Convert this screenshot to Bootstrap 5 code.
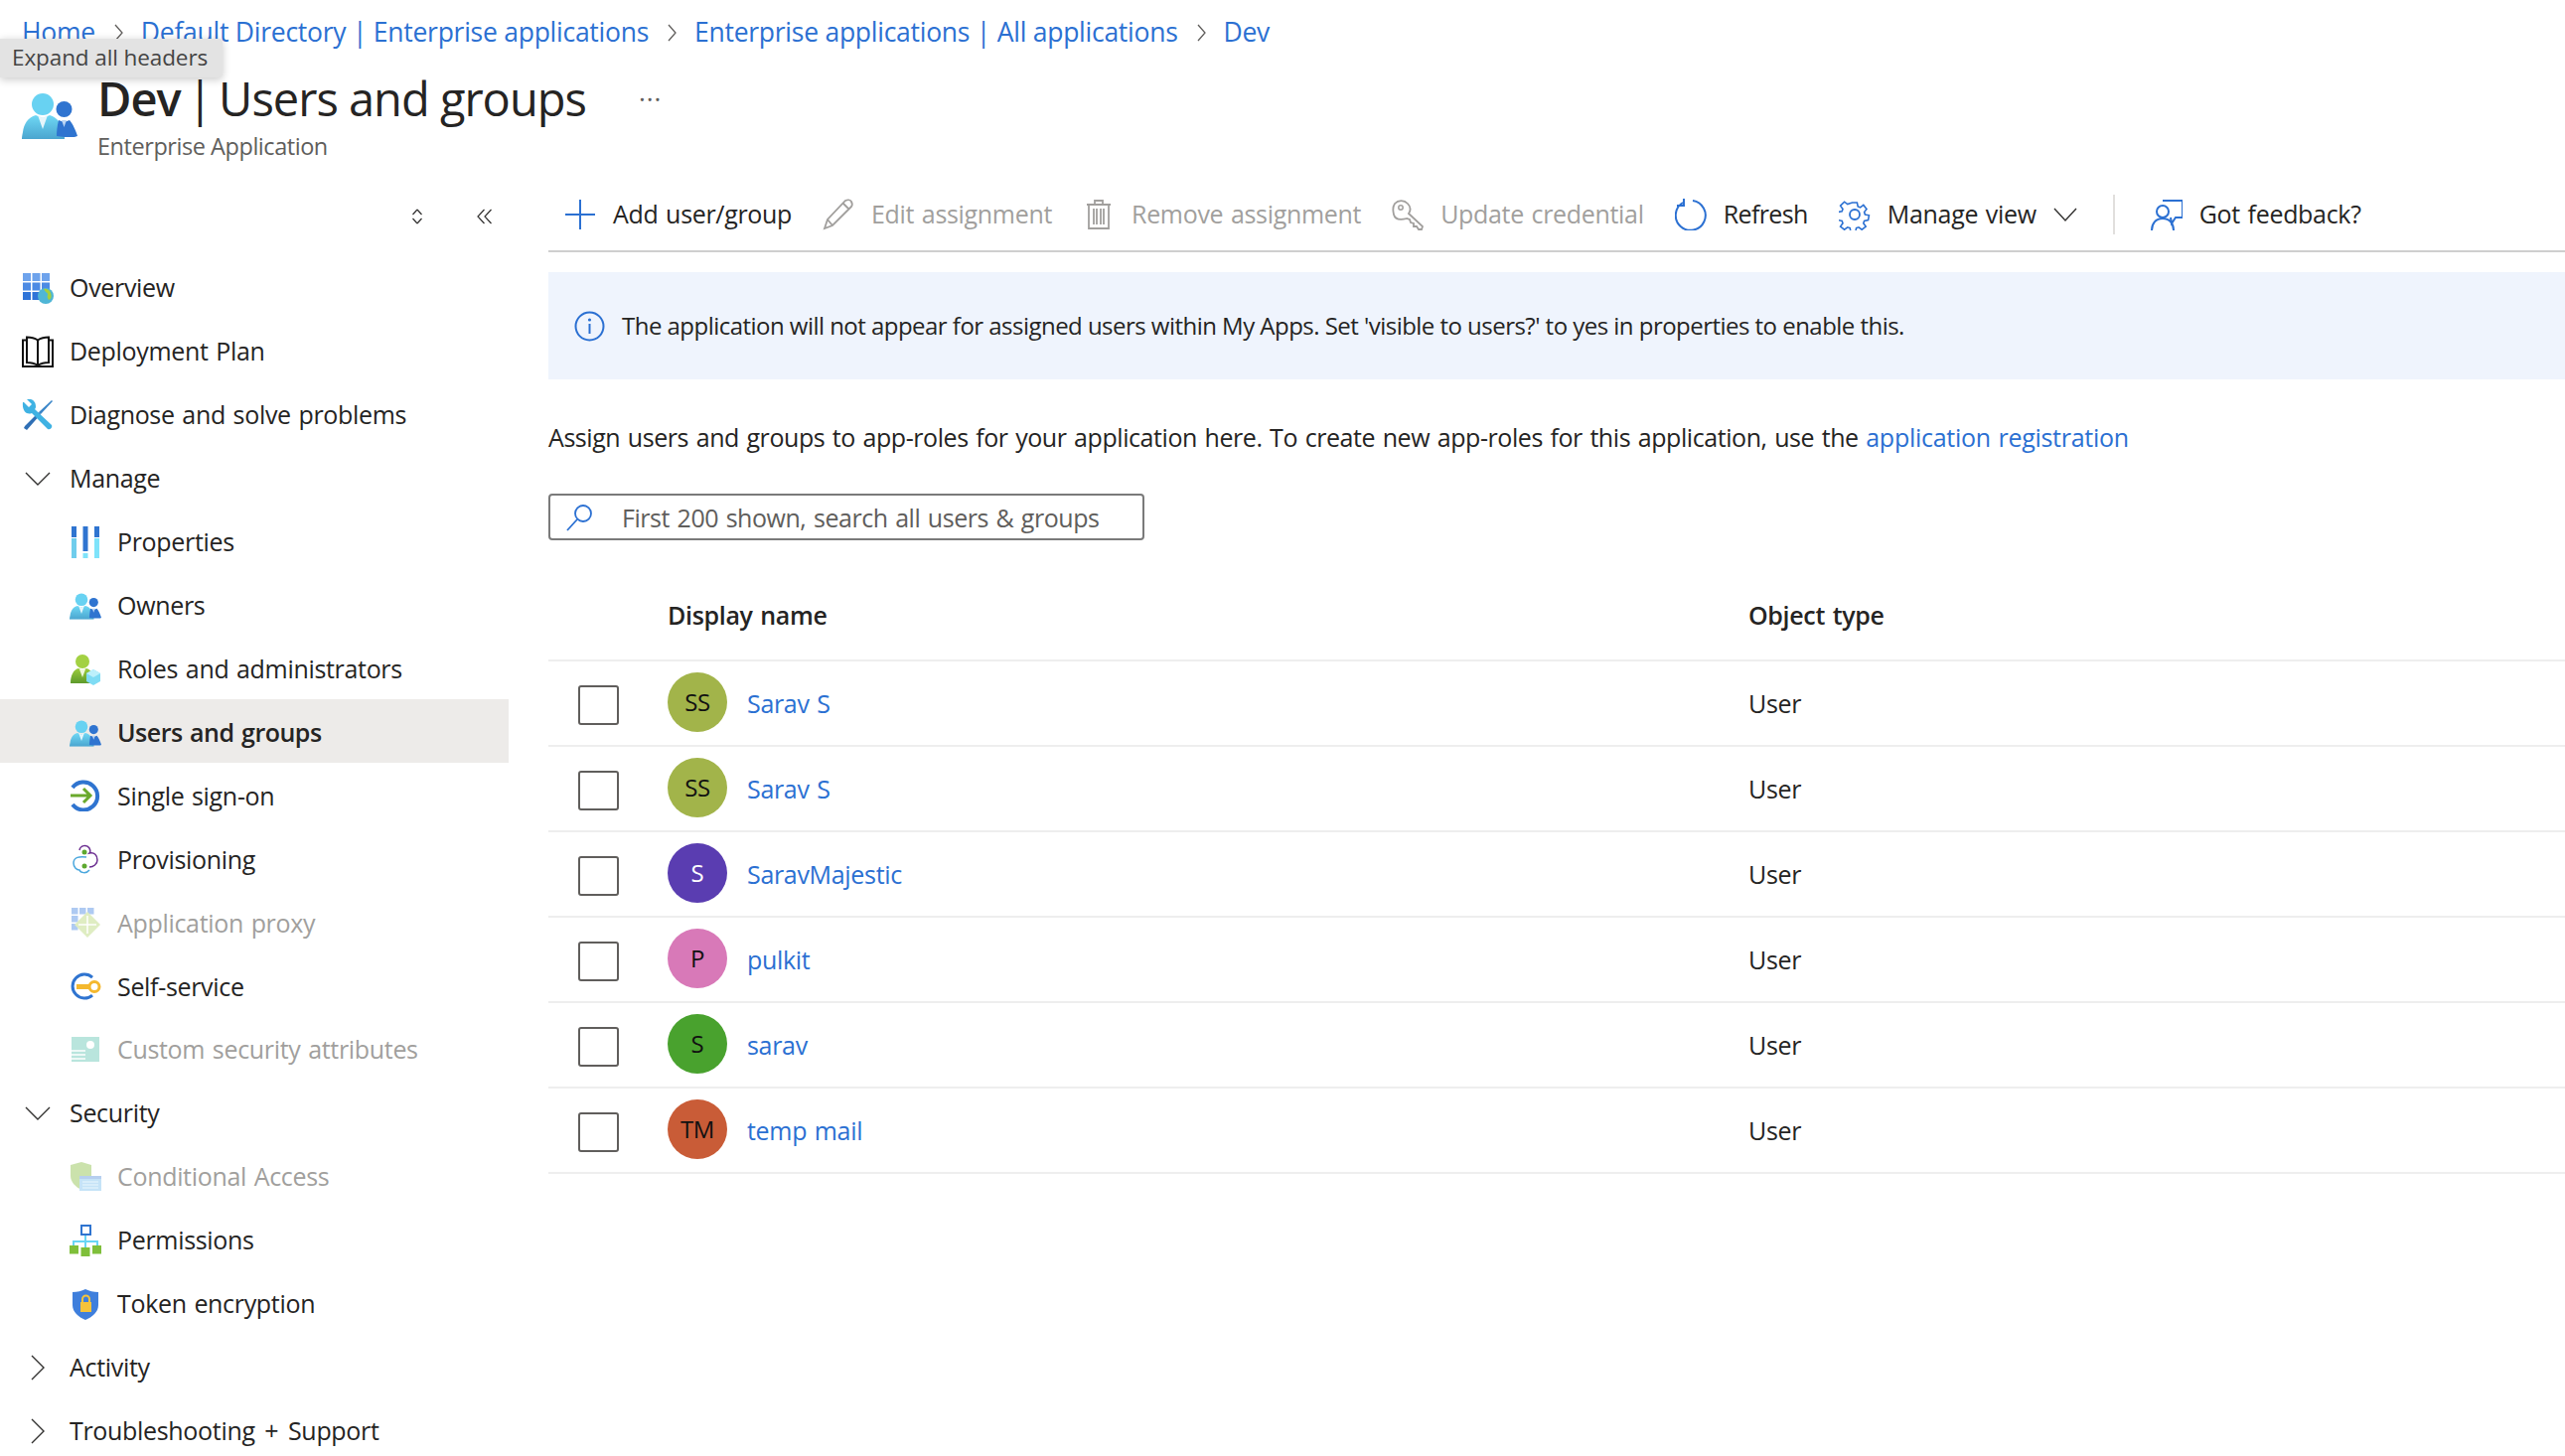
<!DOCTYPE html>
<html lang="en">
<head>
<meta charset="utf-8">
<title>Dev | Users and groups</title>
<link href="https://cdn.jsdelivr.net/npm/bootstrap@5.3.0/dist/css/bootstrap.min.css" rel="stylesheet">
<style>
html,body{height:1466px;overflow:hidden}
body{font-family:"Open Sans","Noto Sans",sans-serif;font-size:25px;letter-spacing:-.32px;word-spacing:1.5px;color:#252423;background:#fff;position:relative}
a{color:#2b70d2;text-decoration:none}
.crumbs{height:64px;padding:1px 0 0 22px;margin:0;align-items:center;--bs-breadcrumb-margin-bottom:0;flex-wrap:nowrap;font-size:26.5px;letter-spacing:-.26px;word-spacing:0}
.crumbs .breadcrumb-item{display:flex;align-items:center;padding:0}
.crumbs .breadcrumb-item::before{display:none}
.crumbs svg{margin:0 18px 0 19px;width:9px;height:18px}
.hover-tip{position:absolute;left:0;top:39px;width:224px;height:39px;background:#e3e3e3;color:#444;font-size:22.5px;letter-spacing:-.1px;word-spacing:0;padding-left:12px;line-height:38px;border-radius:0 4px 4px 0;box-shadow:0 2px 8px rgba(0,0,0,.22);white-space:nowrap;z-index:5}
.blade-head{height:116px;padding-left:22px}
.blade-ico{width:56px;height:47px;margin-top:29px;margin-right:20px}
.blade-title{font-size:47px;line-height:60px;margin:5px 0 0;font-weight:400;letter-spacing:-1px;word-spacing:0;white-space:nowrap}
.blade-title b{font-weight:600}
.blade-pipe{margin:0 -4.400px}
.blade-sub{font-size:23.5px;line-height:36px;color:#605e5c;letter-spacing:-.45px;word-spacing:0}
.blade-more{margin:20px 0 0 53px;font-size:26px;line-height:30px;color:#605e5c;letter-spacing:1px}
.side{width:512px;flex:none}
.side-top{height:78px;padding-bottom:3px;position:relative}
.side-top svg{width:20px;height:20px;margin-right:0}
.side-top .gapper{gap:48px;padding-right:14px}
.nav-row{height:63.95px;padding:0 0 0 22px;color:#252423;white-space:nowrap}
.nav-row.sub{padding-left:70px}
.nav-row .ni{width:32px;height:32px;margin-right:16px;flex:none}
.nav-row.active-row{background:#edebe9;font-weight:600;color:#252423;margin:-2px 0 2px;padding-top:4px;letter-spacing:-.5px}
.nav-row.off{color:#a19f9d}
.nav-row.off .ni{opacity:.45}
.nav-row.wide-words{word-spacing:3.500px}
.content{margin-left:40px;min-width:0}
.tools{height:74px;border-bottom:2px solid #cfcfcf;padding:0 0 1px 16px;gap:31px;white-space:nowrap}
.tool{padding:0;border:0;border-radius:0;font-size:25px;letter-spacing:-.32px;word-spacing:1.5px;color:#252423;gap:17px;--bs-btn-disabled-opacity:1;--bs-btn-disabled-color:#a19f9d;--bs-btn-disabled-border-color:transparent}
.tool.tight{letter-spacing:-.6px}
.tool svg{width:32px;height:32px;flex:none}
.tool .caret{width:24px;height:24px;margin-left:0}
.tool-sep{width:2px;height:40px;background:#e1dfdd;margin:0 5px}
.notice{height:108px;margin:20px 0 0;background:#eff4fd;padding:0 0 0 26px;gap:17px;font-size:24px;letter-spacing:-.53px;word-spacing:0}
.notice svg{width:31px;height:31px;flex:none}
.lead-in{margin:40px 0 0;line-height:36px;white-space:nowrap;letter-spacing:-.43px}
.lead-in a{letter-spacing:-.28px}
.finder{margin-top:39px;width:600px;height:47px;position:relative}
.finder svg{position:absolute;left:17px;top:10px;width:28px;height:28px}
.finder input{height:47px;border:2px solid #7a7a7a;border-radius:4px;padding:0 0 0 72px;font-size:25px;letter-spacing:-.45px;word-spacing:1.5px;box-shadow:none;background:#fff}
.finder input::placeholder{color:#605e5c;opacity:1}
.people{margin:32px 0 0;table-layout:fixed;--bs-table-bg:transparent;--bs-table-color:#252423;--bs-table-border-color:#f0f0f0}
.people th,.people td{padding:0;vertical-align:middle;border-bottom:2px solid #eeeeee;box-shadow:none}
.people thead th{height:89px;font-weight:600}
.people tbody td{height:86px;padding-top:2px}
.people tbody td a{padding-top:0}
.people .c1{width:120px}
.people .c2{width:1088px}
.tick.form-check-input{width:41px;height:40px;margin:1px 0 0 30px;border:2px solid #605e5c;border-radius:3px;display:block}
.ava{width:60px;height:60px;border-radius:50%;margin-right:20px;font-size:24px;letter-spacing:-.4px;color:#111;flex:none;margin-top:-4px}
.ava.lt{color:#fff}
</style>
</head>
<body>
<svg width="0" height="0" class="position-absolute">
<defs>
<linearGradient id="gBig" x1="0" y1="0" x2="0" y2="1"><stop offset="0" stop-color="#6fd8f5"/><stop offset="1" stop-color="#4aa5cf"/></linearGradient>
<linearGradient id="gGrn" x1="0" y1="0" x2="0" y2="1"><stop offset="0" stop-color="#9ccc3c"/><stop offset="1" stop-color="#5d9a2c"/></linearGradient>
<symbol id="i-users" viewBox="0 0 56 47">
<circle cx="21" cy="12" r="11" fill="#68d2f2"/>
<path d="M0 47c0-1 0-3 1-7 1-8 5-15 13-17l7 3 7-3c8 2 12 9 14 17 1 4 1 6 1 7z" fill="url(#gBig)"/>
<path d="M16 23l5 14 5-14-5 3z" fill="#e6f6fb"/>
<circle cx="42.500" cy="17" r="8" fill="#2f74d0"/>
<path d="M35 44c0-4 .5-10 2-16l5.500 2 5.500-2c3 3 7 12 8 16-1 .5-3 1-5 1H43z" fill="#2f74d0"/>
<path d="M40 28l2.500 7 2.500-7z" fill="#bcd6f4"/>
</symbol>
</defs>
</svg>

<div class="hover-tip" role="tooltip">Expand all headers</div>

<ol class="breadcrumb crumbs d-flex">
<li class="breadcrumb-item"><a href="#">Home</a><svg viewBox="0 0 9 18"><path d="M1 1l7 8-7 8" fill="none" stroke="#605e5c" stroke-width="1.300"/></svg></li>
<li class="breadcrumb-item"><a href="#">Default Directory | Enterprise applications</a><svg viewBox="0 0 9 18"><path d="M1 1l7 8-7 8" fill="none" stroke="#605e5c" stroke-width="1.300"/></svg></li>
<li class="breadcrumb-item"><a href="#">Enterprise applications | All applications</a><svg viewBox="0 0 9 18"><path d="M1 1l7 8-7 8" fill="none" stroke="#605e5c" stroke-width="1.300"/></svg></li>
<li class="breadcrumb-item"><a href="#">Dev</a></li>
</ol>

<header class="blade-head d-flex align-items-start">
<svg class="blade-ico"><use href="#i-users"/></svg>
<div>
<h1 class="blade-title"><b>Dev</b> <span class="blade-pipe">|</span> Users and groups</h1>
<div class="blade-sub">Enterprise Application</div>
</div>
<div class="blade-more">···</div>
</header>

<div class="d-flex">
<aside class="side">
<div class="side-top d-flex align-items-center justify-content-end">
<div class="gapper d-flex align-items-center">
<svg viewBox="0 0 20 20"><path d="M10 3l4.500 5M10 3L5.500 8M10 17l4.500-5M10 17l-4.500-5" fill="none" stroke="#323130" stroke-width="1.200"/></svg>
<svg viewBox="0 0 20 20"><path d="M9.500 3L3 10l6.500 7M16.500 3L10 10l6.500 7" fill="none" stroke="#323130" stroke-width="1.200"/></svg>
</div>
</div>
<nav class="nav flex-column">
<a class="nav-row nav-link d-flex align-items-center" href="#">
<svg class="ni" viewBox="0 0 32 32"><g fill="#3f7fde"><rect x="1" y="1" width="8" height="8" fill="#6ea3ec"/><rect x="10.500" y="1" width="8" height="8" fill="#6ea3ec"/><rect x="20" y="1" width="8" height="8" fill="#6ea3ec"/><rect x="1" y="10.500" width="8" height="8" fill="#4d8be4"/><rect x="10.500" y="10.500" width="8" height="8" fill="#4d8be4"/><rect x="20" y="10.500" width="8" height="8" fill="#4d8be4"/><rect x="1" y="20" width="8" height="8" fill="#2f74d8"/><rect x="10.500" y="20" width="8" height="8" fill="#2f74d8"/></g><circle cx="24" cy="24" r="8" fill="#4fb6d6"/><path d="M22 17c3-1 6 1 7 4s1 6-2 7c-1-2-2-3-1-5s-2-2-4-6z" fill="#a6cf3c"/></svg>Overview</a>
<a class="nav-row nav-link d-flex align-items-center" href="#">
<svg class="ni" viewBox="0 0 32 32"><path d="M5 4.500H1V31h30V4.500h-4M5 1.500c4 0 8 1 11 3 3-2 7-3 11-3V27c-4 0-8 1-11 3-3-2-7-3-11-3zM16 4.500V30" fill="none" stroke="#111" stroke-width="2"/></svg>Deployment Plan</a>
<a class="nav-row nav-link d-flex align-items-center" href="#">
<svg class="ni" viewBox="0 0 32 32"><path d="M30 1l1 1-12 13-2-2z" fill="#3b86c8"/><path d="M3 27l14-14 2 2L5 31l-3-2z" fill="#2f6fb5"/><path d="M2 3l5 5 3-3-5-5c5-1 9 2 9 7 0 1 0 2-1 3l17 16c1 2-1 5-4 4L10 14c-5 2-10-2-9-11z" fill="#3fb2e3"/></svg>Diagnose and solve problems</a>
<a class="nav-row nav-link d-flex align-items-center" href="#">
<svg class="ni" viewBox="0 0 32 32"><path d="M4 10l12 12 12-12" fill="none" stroke="#323130" stroke-width="1.400"/></svg>Manage</a>
<a class="nav-row sub nav-link d-flex align-items-center" href="#">
<svg class="ni" viewBox="0 0 32 32"><rect x="2" y="0" width="5" height="11" fill="#2f74d0"/><rect x="2" y="12" width="5" height="20" fill="#6fcdec"/><rect x="13.500" y="0" width="5" height="25" fill="#2f74d0"/><rect x="13.500" y="27" width="5" height="5" fill="#7fe3fa"/><rect x="25" y="0" width="5" height="11" fill="#2f74d0"/><rect x="25" y="12" width="5" height="20" fill="#7fe3fa"/></svg>Properties</a>
<a class="nav-row sub nav-link d-flex align-items-center" href="#">
<svg class="ni" viewBox="0 0 56 56"><use href="#i-users" width="56" height="47" y="5"/></svg>Owners</a>
<a class="nav-row sub nav-link d-flex align-items-center" href="#">
<svg class="ni" viewBox="0 0 32 32"><circle cx="13" cy="8" r="7" fill="#a3d143"/><path d="M1 30c0-8 3-14 8-15l4 2 4-2c4 1 7 5 8 15z" fill="url(#gGrn)"/><path d="M10 16l3 8 3-8z" fill="#eef7da"/><path d="M24 16l7 4v8l-7 4-7-4v-8z" fill="#7fdcf4"/><path d="M24 24l7-4-7-4-7 4z" fill="#bdf0fb"/></svg>Roles and administrators</a>
<a class="nav-row sub active-row nav-link d-flex align-items-center" href="#">
<svg class="ni" viewBox="0 0 56 56"><use href="#i-users" width="56" height="47" y="5"/></svg>Users and groups</a>
<a class="nav-row sub nav-link d-flex align-items-center" href="#">
<svg class="ni" viewBox="0 0 32 32"><path d="M3 8a14 14 0 1 1 0 17" fill="none" stroke="#2f74d0" stroke-width="4"/><path d="M1 16h20M14 9l7 7-7 7" fill="none" stroke="#6aa92c" stroke-width="3"/></svg>Single sign-on</a>
<a class="nav-row sub nav-link d-flex align-items-center" href="#">
<svg class="ni" viewBox="0 0 32 32"><path d="M10 7a5.500 5.500 0 0 1 10-2c1 2 1 4 0 5 5-1 8 2 8 7 0 4-4 7-8 7" fill="none" stroke="#6b2d90" stroke-width="1.500"/><path d="M17 14C10 13 4 14 4 20c0 4 3 7 6 7 1 3 7 4 10 0" fill="none" stroke="#4aa7dd" stroke-width="1.500"/><circle cx="15" cy="9" r="2.500" fill="#5da82f"/><circle cx="15" cy="23" r="2.500" fill="#5da82f"/></svg>Provisioning</a>
<a class="nav-row sub off nav-link d-flex align-items-center" href="#">
<svg class="ni" viewBox="0 0 32 32"><g fill="#4d8be4"><rect x="2" y="1" width="6.500" height="6.500"/><rect x="10" y="1" width="6.500" height="6.500"/><rect x="18" y="1" width="6.500" height="6.500"/><rect x="2" y="9" width="6.500" height="6.500"/><rect x="2" y="17" width="6.500" height="6.500"/></g><path d="M18 5l13 13-13 13L5 18z" fill="#b9d87a"/><path d="M18 9v18M9 18h18" stroke="#fff" stroke-width="1.500"/></svg>Application proxy</a>
<a class="nav-row sub nav-link d-flex align-items-center" href="#">
<svg class="ni" viewBox="0 0 32 32"><path d="M23 7a12 12 0 1 0 0 18" fill="none" stroke="#2f74d0" stroke-width="3"/><path d="M7 14h15v5H7z" fill="#f4b82e"/><circle cx="25" cy="16.500" r="5" fill="#fff" stroke="#f4b82e" stroke-width="3"/></svg>Self-service</a>
<a class="nav-row sub off nav-link d-flex align-items-center" href="#">
<svg class="ni" viewBox="0 0 32 32"><path d="M2 3h28v25H2z" fill="#65c7b5"/><path d="M2 17h14M2 21h14M2 25h14" stroke="#fff" stroke-width="1.500"/><circle cx="21" cy="11" r="4" fill="#fff"/></svg>Custom security attributes</a>
<a class="nav-row nav-link d-flex align-items-center" href="#">
<svg class="ni" viewBox="0 0 32 32"><path d="M4 10l12 12 12-12" fill="none" stroke="#323130" stroke-width="1.400"/></svg>Security</a>
<a class="nav-row sub off nav-link d-flex align-items-center" href="#">
<svg class="ni" viewBox="0 0 32 32"><path d="M1 4l11-3 10 3v11c0 6-5 11-10 14C6 26 1 21 1 15z" fill="#8dc04a"/><path d="M10 15h22v15H10z" fill="#7fc3ee"/><path d="M10 15h22v3H10z" fill="#5e96dc"/><path d="M13 21h16M13 24h16M13 27h16" stroke="#d8f0fb" stroke-width="1.200"/></svg>Conditional Access</a>
<a class="nav-row sub nav-link d-flex align-items-center" href="#">
<svg class="ni" viewBox="0 0 32 32"><path d="M16 10v14M4 22v-5h24v5" fill="none" stroke="#69d5f4" stroke-width="2"/><rect x="12" y="1" width="9" height="9" fill="#fff" stroke="#2f74d0" stroke-width="2"/><rect x="0" y="21" width="9" height="8.500" fill="#7fbf3a"/><rect x="11.500" y="23" width="9" height="9" fill="#7fbf3a"/><rect x="23" y="21" width="9" height="8.500" fill="#7fbf3a"/></svg>Permissions</a>
<a class="nav-row sub nav-link d-flex align-items-center" href="#">
<svg class="ni" viewBox="0 0 32 32"><path d="M16 1c4 2 8 3 13 3v13c0 7-6 12-13 15C9 29 3 24 3 17V4c5 0 9-1 13-3z" fill="#3f7fdc"/><path d="M11 14h11v10H11z" fill="#f5c33b"/><path d="M13 14v-3a3.500 3.500 0 0 1 7 0v3" fill="none" stroke="#f5c33b" stroke-width="2"/></svg>Token encryption</a>
<a class="nav-row nav-link d-flex align-items-center" href="#">
<svg class="ni" viewBox="0 0 32 32"><path d="M10 4l12 12-12 12" fill="none" stroke="#323130" stroke-width="1.400"/></svg>Activity</a>
<a class="nav-row wide-words nav-link d-flex align-items-center" href="#">
<svg class="ni" viewBox="0 0 32 32"><path d="M10 4l12 12-12 12" fill="none" stroke="#323130" stroke-width="1.400"/></svg>Troubleshooting + Support</a>
</nav>
</aside>

<main class="content flex-grow-1">
<div class="tools d-flex align-items-center">
<button class="tool btn d-flex align-items-center"><svg viewBox="0 0 32 32"><path d="M16 1v30M1 16h30" stroke="#2b70d2" stroke-width="2" fill="none"/></svg>Add user/group</button>
<button class="tool btn d-flex align-items-center" disabled><svg viewBox="0 0 32 32"><path d="M2 30l3-9L23 2c2-1 5-1 6 1s1 4 0 5L10 27zM5 21l5 6M21 5l6 6" fill="none" stroke="#a19f9d" stroke-width="1.800"/></svg>Edit assignment</button>
<button class="tool btn d-flex align-items-center" disabled><svg viewBox="0 0 32 32"><path d="M4 6h24M12 6V2h8v4M6 6v24h20V6M11 10v16M14 10v16M18 10v16M21 10v16" fill="none" stroke="#a19f9d" stroke-width="1.800"/></svg>Remove assignment</button>
<button class="tool btn d-flex align-items-center" disabled><svg viewBox="0 0 32 32"><path d="M3 5a9 9 0 0 1 13 0c3 3 3 7 1 10l14 13-1 3h-3l-2-3-3 0v-3l-3-1-1-3-3-1C7 22 3 20 2 16c-1-4-1-8 1-11z" fill="none" stroke="#a19f9d" stroke-width="1.800"/><circle cx="9" cy="9" r="2.200" fill="none" stroke="#a19f9d" stroke-width="1.500"/></svg>Update credential</button>
<button class="tool tight btn d-flex align-items-center"><svg viewBox="0 0 32 32"><path d="M8 4a15 15 0 1 0 10-2" fill="none" stroke="#2b70d2" stroke-width="2"/><path d="M9 0v7H2" fill="none" stroke="#2b70d2" stroke-width="2"/></svg>Refresh</button>
<button class="tool btn d-flex align-items-center"><svg viewBox="0 0 32 32"><path d="M13 1h6l1 5 3 1 4-3 4 5-3 4 1 3 5 1v0l-1 6-5 1-1 3 3 4-5 4-4-3-3 1-1 5h-6l-1-5-3-1-4 3-5-4 3-4-1-3-5-1V13l5-1 1-3-3-4 5-5 4 3 3-1z" transform="translate(3.200 3.200) scale(.8)" fill="none" stroke="#2b70d2" stroke-width="2"/><circle cx="16" cy="16" r="5" fill="none" stroke="#2b70d2" stroke-width="1.800"/></svg>Manage view<svg class="caret" viewBox="0 0 24 24"><path d="M1 6l11 12L23 6" fill="none" stroke="#323130" stroke-width="1.400"/></svg></button>
<div class="tool-sep"></div>
<button class="tool btn d-flex align-items-center"><svg viewBox="0 0 32 32"><path d="M12 2h20v17h-7l-4 6-1-6" fill="none" stroke="#2b70d2" stroke-width="2"/><circle cx="12" cy="13" r="6" fill="#fff" stroke="#2b70d2" stroke-width="2"/><path d="M1 32c0-7 4-12 11-12s11 5 11 12" fill="none" stroke="#2b70d2" stroke-width="2"/></svg>Got feedback?</button>
</div>

<div class="notice alert border-0 d-flex align-items-center rounded-0" role="alert">
<svg viewBox="0 0 31 31"><circle cx="15.500" cy="15.500" r="14" fill="none" stroke="#2b70d2" stroke-width="2"/><circle cx="15.500" cy="9" r="1.600" fill="#2b70d2"/><path d="M15.500 13v10" stroke="#2b70d2" stroke-width="2"/></svg>
<span>The application will not appear for assigned users within My Apps. Set 'visible to users?' to yes in properties to enable this.</span>
</div>

<p class="lead-in">Assign users and groups to app-roles for your application here. To create new app-roles for this application, use the <a href="#">application registration</a></p>

<div class="finder">
<svg viewBox="0 0 28 28"><circle cx="18" cy="10" r="8" fill="none" stroke="#2b70d2" stroke-width="1.800"/><path d="M12 16L2 27" stroke="#2b70d2" stroke-width="1.800"/></svg>
<input class="form-control" type="text" placeholder="First 200 shown, search all users &amp; groups" aria-label="Search">
</div>

<table class="table people">
<thead><tr><th class="c1"></th><th class="c2">Display name</th><th>Object type</th></tr></thead>
<tbody>
<tr><td><input class="form-check-input tick" type="checkbox" aria-label="Select"></td><td><div class="d-flex align-items-center"><span class="ava d-flex align-items-center justify-content-center" style="background:#a2b44a">SS</span><a href="#">Sarav S</a></div></td><td>User</td></tr>
<tr><td><input class="form-check-input tick" type="checkbox" aria-label="Select"></td><td><div class="d-flex align-items-center"><span class="ava d-flex align-items-center justify-content-center" style="background:#a2b44a">SS</span><a href="#">Sarav S</a></div></td><td>User</td></tr>
<tr><td><input class="form-check-input tick" type="checkbox" aria-label="Select"></td><td><div class="d-flex align-items-center"><span class="ava lt d-flex align-items-center justify-content-center" style="background:#5a3db1">S</span><a href="#">SaravMajestic</a></div></td><td>User</td></tr>
<tr><td><input class="form-check-input tick" type="checkbox" aria-label="Select"></td><td><div class="d-flex align-items-center"><span class="ava d-flex align-items-center justify-content-center" style="background:#d879b8">P</span><a href="#">pulkit</a></div></td><td>User</td></tr>
<tr><td><input class="form-check-input tick" type="checkbox" aria-label="Select"></td><td><div class="d-flex align-items-center"><span class="ava d-flex align-items-center justify-content-center" style="background:#49a22e">S</span><a href="#">sarav</a></div></td><td>User</td></tr>
<tr><td><input class="form-check-input tick" type="checkbox" aria-label="Select"></td><td><div class="d-flex align-items-center"><span class="ava d-flex align-items-center justify-content-center" style="background:#c95c37">TM</span><a href="#">temp mail</a></div></td><td>User</td></tr>
</tbody>
</table>
</main>
</div>
<script src="https://cdn.jsdelivr.net/npm/bootstrap@5.3.0/dist/js/bootstrap.bundle.min.js"></script>
</body>
</html>
